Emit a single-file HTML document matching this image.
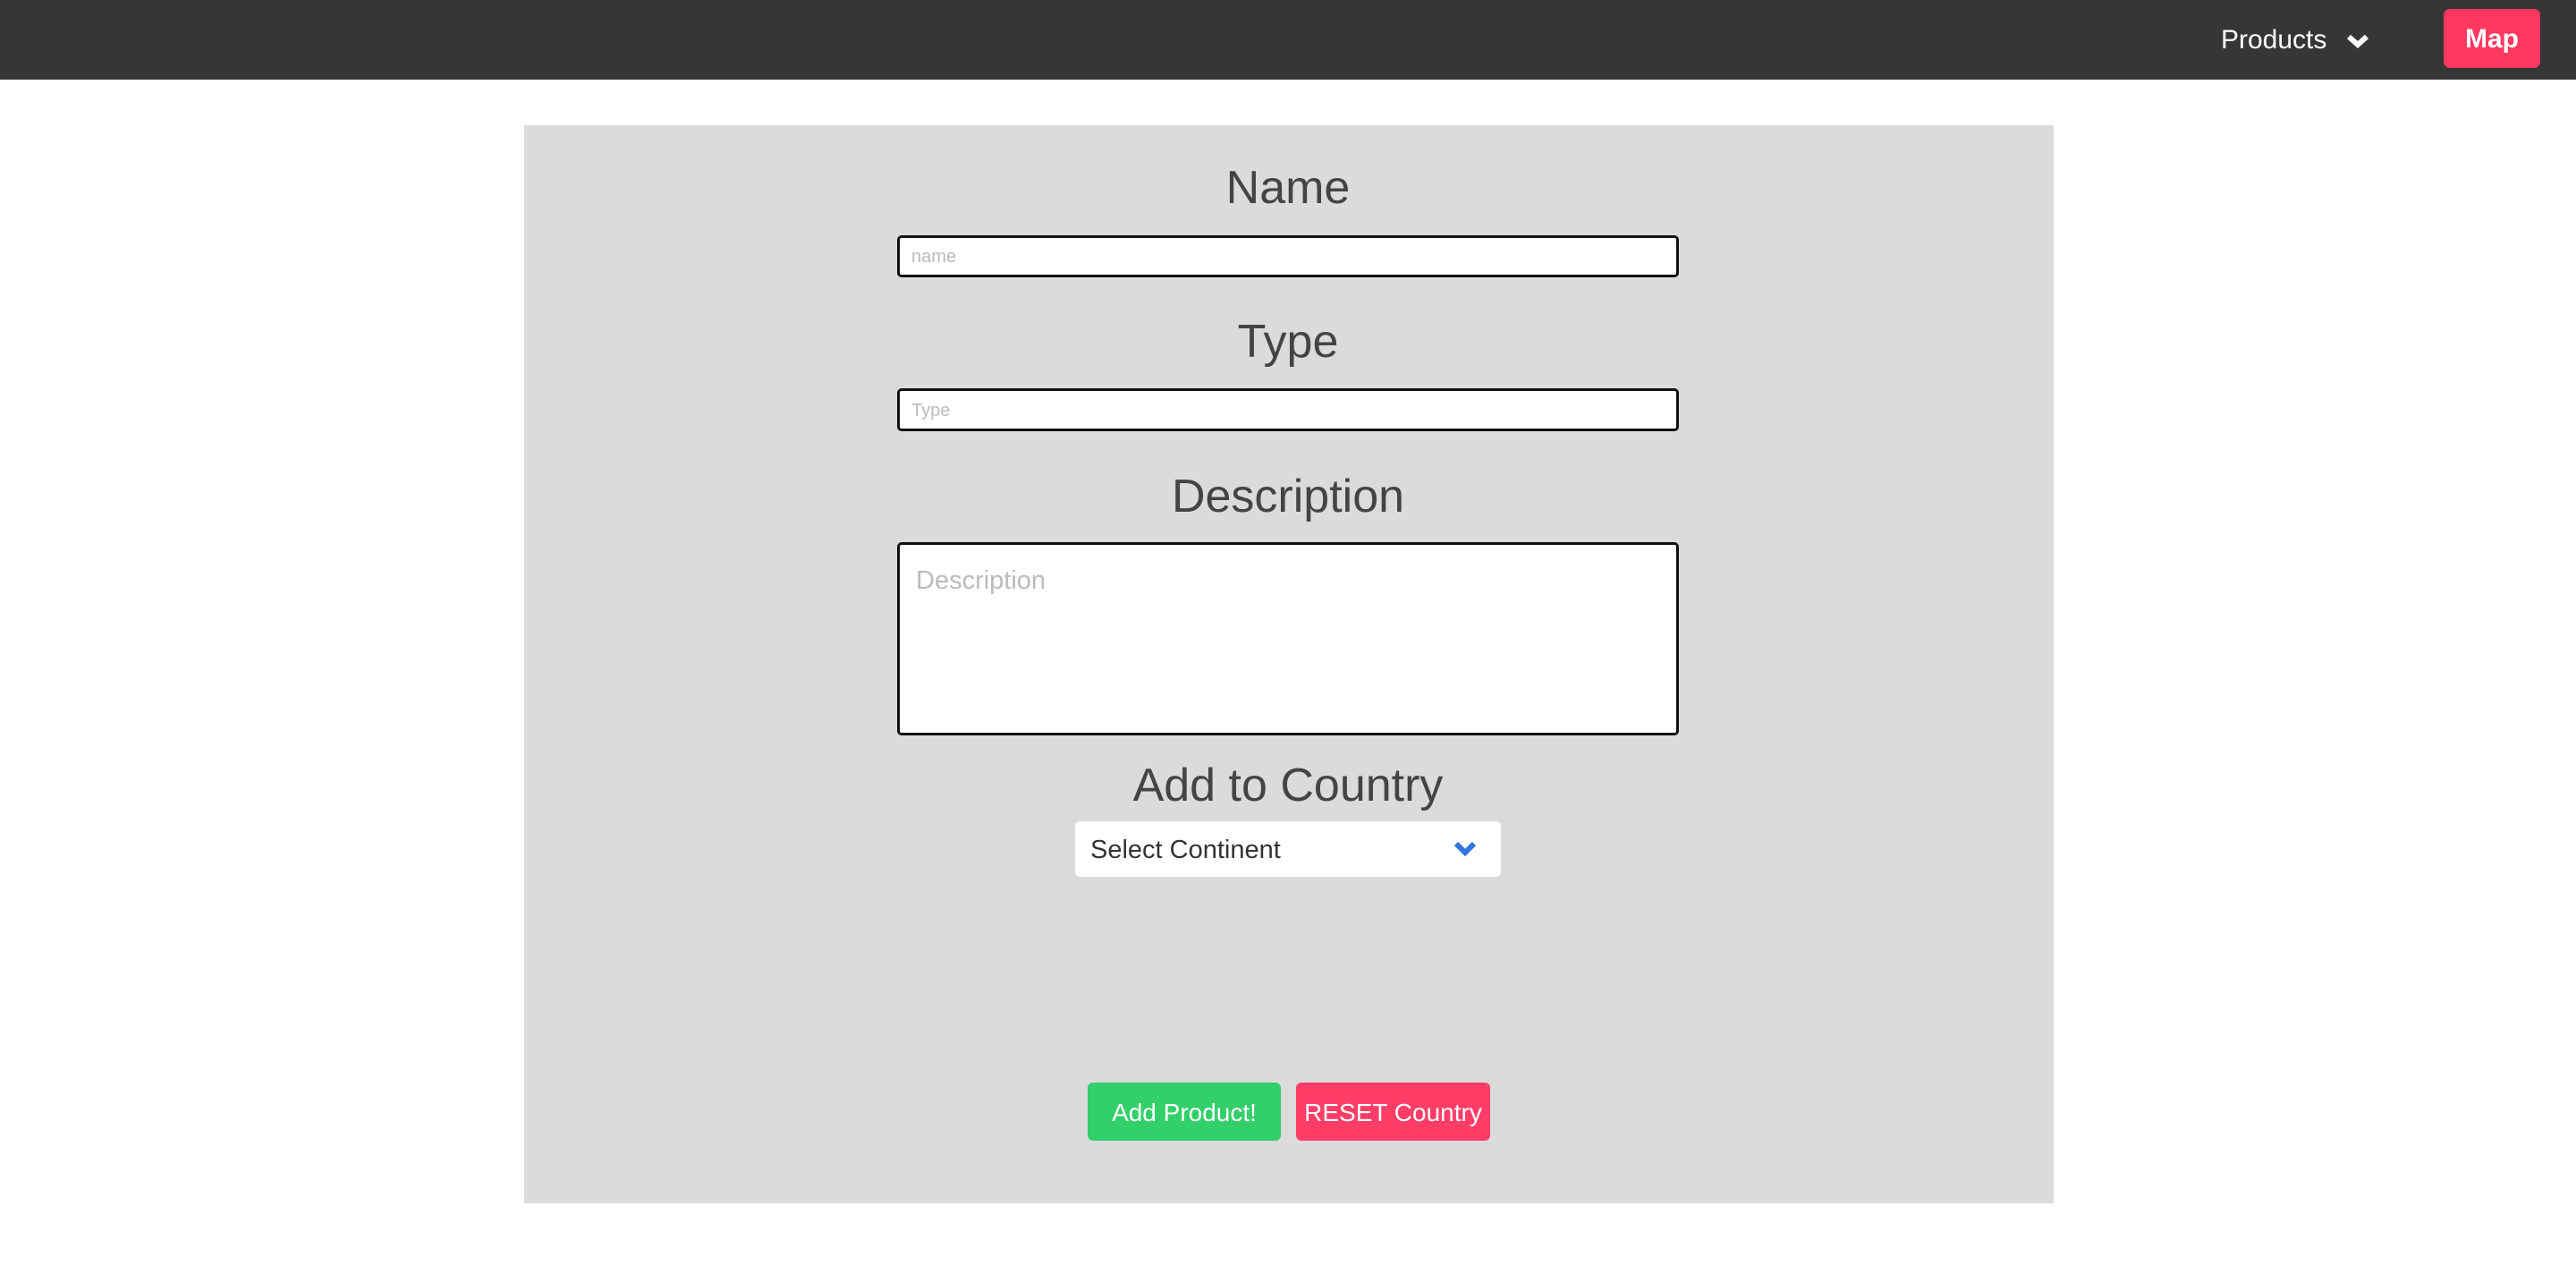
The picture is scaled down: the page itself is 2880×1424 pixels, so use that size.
<!DOCTYPE html>
<html><head><meta charset="utf-8"><style>
*{box-sizing:border-box;margin:0;padding:0}
body{width:2880px;height:1424px;background:#fff;font-family:"Liberation Sans",sans-serif;position:relative;overflow:hidden}
.nav{position:absolute;left:0;top:0;width:2880px;height:89px;background:#363636}
.prod{position:absolute;left:2483px;top:25px;color:#fff;font-size:30px;line-height:40px}
.map{position:absolute;left:2732px;top:10px;width:108px;height:66px;background:#ff3860;border-radius:7px;color:#fff;font-weight:bold;font-size:30px;line-height:68px;text-align:center}
.box{position:absolute;left:586px;top:140px;width:1710px;height:1205px;background:#dbdbdb}
h2{position:absolute;width:2880px;left:0;text-align:center;font-weight:normal;color:#444;font-size:52px;line-height:60px}
.in{position:absolute;left:1003px;width:874px;background:#fff;border:3px solid #111;border-radius:5px;color:#bbb}
.sel{position:absolute;left:1202px;top:918px;width:476px;height:62px;background:#fff;border-radius:5px;font-size:29px;line-height:64px;padding-left:17px;color:#333}
.btn{position:absolute;top:1210px;height:65px;border-radius:6px;color:#fff;font-size:28px;line-height:67px;text-align:center}
</style></head><body>
<div class="nav">
<div class="prod">Products <svg width="28" height="20" viewBox="0 0 28 20" style="margin-left:12px;vertical-align:middle"><path d="M4 5 L14 14 L24 5" stroke="#fff" stroke-width="6" fill="none"/></svg></div>
<div class="map">Map</div>
</div>
<div class="box"></div>
<h2 style="top:180px">Name</h2>
<div class="in" style="top:263px;height:47px;font-size:20px;line-height:43px;padding-left:13px">name</div>
<h2 style="top:352px">Type</h2>
<div class="in" style="top:434px;height:48px;font-size:20px;line-height:44px;padding-left:13px">Type</div>
<h2 style="top:525px">Description</h2>
<div class="in" style="top:606px;height:216px;font-size:29px;padding:24px 0 0 18px">Description</div>
<h2 style="top:848px">Add to Country</h2>
<div class="sel">Select Continent<svg width="28" height="20" viewBox="0 0 28 20" style="position:absolute;right:26px;top:21px"><path d="M4 4 L14 14 L24 4" stroke="#3273dc" stroke-width="6" fill="none"/></svg></div>
<div class="btn" style="left:1216px;width:216px;background:#33cf6a">Add Product!</div>
<div class="btn" style="left:1449px;width:217px;background:#ff3d66">RESET Country</div>
</body></html>
